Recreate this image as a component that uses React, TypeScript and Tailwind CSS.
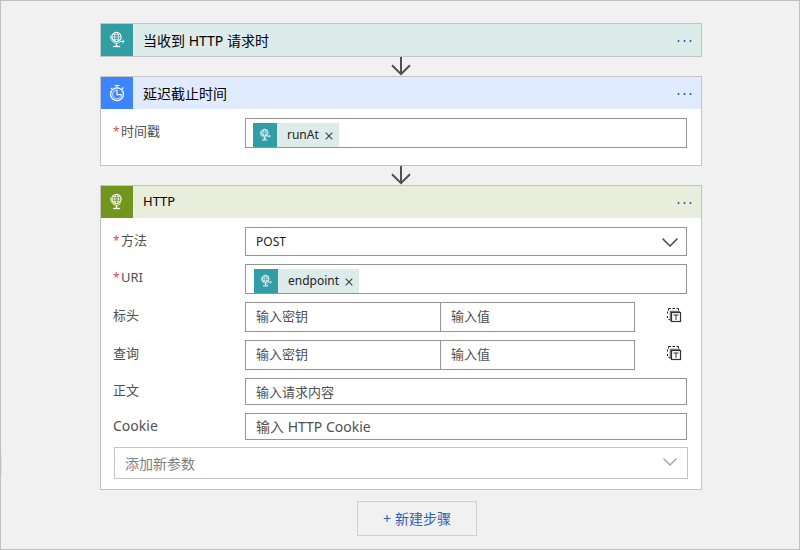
import type { ReactNode } from "react";

const fieldBorder = "border border-[#949494]";
const textInput =
  "block w-full min-w-0 bg-white px-2.5 text-[#222] placeholder:text-[#505050] placeholder:opacity-100 outline-none";

function GlobeIcon({ className, arrow = true }: { className: string; arrow?: boolean }) {
  return (
    <svg className={className} viewBox="0 0 16 18" fill="none" stroke="white" strokeWidth="0.8" aria-hidden="true">
      <circle cx="7.5" cy="6" r="4.6" strokeWidth="1.1" />
      <ellipse cx="7.5" cy="6" rx="2" ry="4.6" strokeWidth="0.7" />
      <path d="M3 6h9M3.6 3.6h7.8M3.6 8.4h7.8" strokeWidth="0.6" />
      <path d="M2 4.2C.8 8 3.4 12.2 7.5 12.2c1.6 0 3-.6 4-1.6" />
      <path d="M7.5 12v3" strokeWidth="1.5" />
      <path d="M4 15.5h7.2" strokeWidth="1.3" />
      {arrow && (
        <>
          <path d="M11 10.5h4" strokeWidth="1" />
          <path d="M13.4 8.8l1.8 1.7-1.8 1.7" strokeWidth="1" />
        </>
      )}
    </svg>
  );
}

function StopwatchIcon() {
  return (
    <svg className="h-[18px] w-4" viewBox="0 0 16 18" fill="none" stroke="white" strokeWidth="1.1" aria-hidden="true">
      <circle cx="8" cy="10.2" r="6.4" strokeWidth="1.2" />
      <path d="M5.6 1.5h5M8 1.5v2.3M13 5l1.4-1.5M3 5L2 4" />
      <path d="M8 6v4.6h4.4" />
      <path d="M8 6a4.4 4.4 0 1 0 4.4 4.6" strokeWidth="0.8" />
    </svg>
  );
}

function TextModeIcon() {
  return (
    <svg className="h-[15px] w-[15px]" viewBox="0 0 15 15" fill="none" aria-hidden="true">
      <path d="M4 .5H1.5v2M.5 3.5v2M.5 8v2M1.5 11.5H4M5.5 .5H8M9.5 .5h2v2" stroke="#222" />
      <path d="M3.5 13V3.5H13" stroke="#777" strokeWidth="1.6" />
      <rect x="4.5" y="4.5" width="9" height="9" fill="white" stroke="#333" strokeWidth="1.2" />
      <path d="M6.5 7h5M9 7v5" stroke="#333" />
    </svg>
  );
}

function Chevron({ className }: { className: string }) {
  return (
    <svg className={className} viewBox="0 0 16 9" fill="none" stroke="currentColor" strokeWidth="1.5" aria-hidden="true">
      <path d="M.6 .6L8 8l7.4-7.4" />
    </svg>
  );
}

function Arrow() {
  return (
    <div className="flex justify-center">
      <svg className="h-[19px] w-5" viewBox="0 0 20 19" fill="none" stroke="#4f4f4f" strokeWidth="2" aria-hidden="true">
        <path d="M10 0v17.5M1 8.2l9 9 9-9" />
      </svg>
    </div>
  );
}

function CardHeader({ icon, title, iconBg, bg, small }: { icon: ReactNode; title: string; iconBg: string; bg: string; small?: boolean }) {
  return (
    <header className={`flex h-8 items-center ${bg}`}>
      <span className={`flex size-8 shrink-0 items-center justify-center ${iconBg}`}>{icon}</span>
      <h2 className={`flex-1 pl-2.5 text-black ${small ? "text-[13px]" : "text-[14px]"}`}>{title}</h2>
      <button type="button" aria-label={`${title} 菜单`} className="flex h-8 items-center gap-[3px] pr-[9px] pt-px">
        <i className="h-0.5 w-[3px] border-x border-[#a9c2e6] bg-[#2560b8]" />
        <i className="h-0.5 w-[3px] border-x border-[#a9c2e6] bg-[#2560b8]" />
        <i className="h-0.5 w-[3px] border-x border-[#a9c2e6] bg-[#2560b8]" />
      </button>
    </header>
  );
}

function Row({ id, label, required, large, children }: { id: string; label: string; required?: boolean; large?: boolean; children: ReactNode }) {
  return (
    <div className="flex items-center pl-3 pr-3.5">
      <label htmlFor={id} className={`flex w-[132px] shrink-0 items-center pb-0.5 text-[#505050] ${large ? "text-[14px]" : "text-[13px]"}`}>
        {required && <span className="w-2 text-[12px] leading-4 text-[#e84a5a]">*</span>}
        {label}
      </label>
      <div className="min-w-0 flex-1">{children}</div>
    </div>
  );
}

function TokenField({ id, token, inset }: { id: string; token: string; inset: string }) {
  return (
    <div className={`flex h-[30px] items-end bg-white ${fieldBorder} ${inset}`}>
      <span className="flex h-6 shrink-0 items-center bg-[#deebeb] text-[12px] text-[#222]">
        <span className="flex size-6 items-center justify-center bg-[#329da5]">
          <GlobeIcon className="h-[14px] w-3" />
        </span>
        <span className="pl-2.5">{token}</span>
        <button type="button" aria-label={`删除 ${token}`} className="flex h-6 items-center pl-1.5 pr-1.5 pt-0.5">
          <svg className="size-2" viewBox="0 0 8 8" stroke="#444" strokeWidth="1.2" aria-hidden="true">
            <path d="M.7 .7l6.6 6.6M7.3 .7L.7 7.3" />
          </svg>
        </button>
      </span>
      <input id={id} type="text" className="h-full min-w-0 flex-1 px-2 text-[13px] outline-none" />
    </div>
  );
}

function PairFields({ id, label }: { id: string; label: string }) {
  return (
    <div className="flex items-center">
      <div className={`grid h-[30px] flex-1 grid-cols-2 text-[13px] ${fieldBorder}`}>
        <input id={id} type="text" placeholder="输入密钥" className={textInput} />
        <input type="text" aria-label={`${label}值`} placeholder="输入值" className={`${textInput} border-l border-[#949494]`} />
      </div>
      <button type="button" aria-label={`${label}切换到文本模式`} className="flex w-[52px] shrink-0 justify-end pb-1 pr-[5px]">
        <TextModeIcon />
      </button>
    </div>
  );
}

const card = "border border-[#c4c4c4] bg-white";

export default function App() {
  return (
    <div className="relative min-h-screen border border-[#bfbfbf] bg-[#f1f1f1] pb-3 pl-0.5 pt-[22px] font-['Noto_Sans','Noto_Sans_CJK_SC',sans-serif]">
      <span className="absolute left-0 top-[454px] h-5 w-px bg-[#e2e2e2]" />
      <main className="mx-auto w-full max-w-[602px]">
        <section className={card}>
          <CardHeader icon={<GlobeIcon className="h-[18px] w-4" />} title="当收到 HTTP 请求时" iconBg="bg-[#329da5]" bg="bg-[#deebeb]" />
        </section>
        <Arrow />
        <section className={`${card} pb-[17px]`}>
          <CardHeader icon={<StopwatchIcon />} title="延迟截止时间" iconBg="bg-[#3c85ff]" bg="bg-[#e1ebff]" />
          <div className="pt-[9px]">
            <Row id="timestamp" label="时间戳" required>
              <TokenField id="timestamp" token="runAt" inset="pl-[7px]" />
            </Row>
          </div>
        </section>
        <Arrow />
        <section className={`${card} pb-2.5`}>
          <CardHeader icon={<GlobeIcon className="h-[18px] w-4" arrow={false} />} title="HTTP" iconBg="bg-[#71961b]" bg="bg-[#e9eddc]" small />
          <div className="flex flex-col gap-2 pt-[9px]">
            <Row id="method" label="方法" required>
              <div className="relative">
                <select id="method" className={`block h-[29px] w-full appearance-none bg-white pl-2.5 pr-9 text-[12px] text-[#222] outline-none ${fieldBorder}`}>
                  <option>POST</option>
                  <option>GET</option>
                </select>
                <Chevron className="pointer-events-none absolute right-[9px] top-[11px] h-[9px] w-4 text-[#505050]" />
              </div>
            </Row>
            <Row id="uri" label="URI" required>
              <TokenField id="uri" token="endpoint" inset="pl-2" />
            </Row>
            <Row id="headers" label="标头">
              <PairFields id="headers" label="标头" />
            </Row>
            <Row id="queries" label="查询">
              <PairFields id="queries" label="查询" />
            </Row>
            <Row id="body" label="正文">
              <input id="body" type="text" placeholder="输入请求内容" className={`${textInput} h-[27px] text-[13px] ${fieldBorder}`} />
            </Row>
            <Row id="cookie" label="Cookie" large>
              <input id="cookie" type="text" placeholder="输入 HTTP Cookie" className={`${textInput} h-[27px] text-[14px] ${fieldBorder}`} />
            </Row>
          </div>
          <div className="px-[13px] pt-[7px]">
            <div className="relative">
              <select aria-label="添加新参数" className="block h-8 w-full appearance-none border border-[#c4c4c4] bg-white pl-2.5 pr-9 text-[14px] text-[#808080] outline-none">
                <option>添加新参数</option>
              </select>
              <Chevron className="pointer-events-none absolute right-[11px] top-[11px] h-2 w-[14px] text-[#a0a0a0]" />
            </div>
          </div>
        </section>
        <div className="flex justify-center pl-8 pt-[11px]">
          <button type="button" className="flex h-[35px] w-[120px] items-center justify-center gap-1 border border-[#d0d0d0] text-[14px] text-[#2b62b5]">
            <span>+</span>
            <span>新建步骤</span>
          </button>
        </div>
      </main>
    </div>
  );
}
